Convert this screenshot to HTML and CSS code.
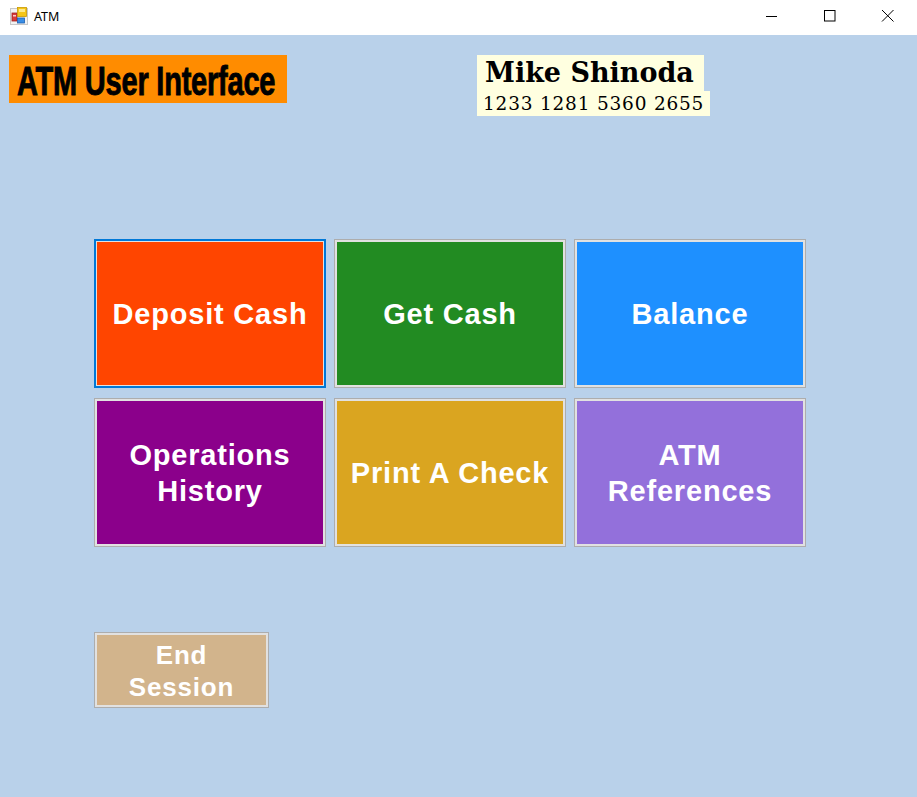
FILE: index.html
```html
<!DOCTYPE html>
<html lang="en">
<head>
<meta charset="utf-8">
<title>ATM</title>
<link rel="stylesheet" href="styles.css">
</head>
<body>
<div class="window">
  <div class="titlebar">
    <div class="app">
      <svg class="app-icon" width="18" height="18" viewBox="0 0 18 18">
        <rect x="0.5" y="1.5" width="17" height="16" fill="#f2f2f2" stroke="#c8c8c8"/>
        <rect x="2" y="6" width="5" height="8" fill="#d83b3b" stroke="#a02020" stroke-width="0.8"/>
        <rect x="3" y="8" width="3" height="1.5" fill="#f7c9c9"/>
        <rect x="7.5" y="0.5" width="9" height="9" fill="#f5c518" stroke="#c99a00" stroke-width="0.8"/>
        <rect x="9" y="2" width="6" height="3" fill="#fde98a"/>
        <rect x="7.5" y="11" width="7" height="5" fill="#3a8ee6" stroke="#1c5fb0" stroke-width="0.8"/>
      </svg>
      <span class="app-name">ATM</span>
    </div>
    <div class="controls">
      <div class="ctl">
        <svg width="14" height="14" viewBox="0 0 14 14"><line x1="1" y1="7.5" x2="12" y2="7.5" stroke="#000" stroke-width="1"/></svg>
      </div>
      <div class="ctl">
        <svg width="14" height="14" viewBox="0 0 14 14"><rect x="1.5" y="1.5" width="10.5" height="10.5" fill="none" stroke="#000" stroke-width="1"/></svg>
      </div>
      <div class="ctl">
        <svg width="14" height="14" viewBox="0 0 14 14"><path d="M1 1 L12.5 12.5 M12.5 1 L1 12.5" stroke="#000" stroke-width="1"/></svg>
      </div>
    </div>
  </div>

  <div class="content">
    <div class="header">
      <div class="brand"><span class="brand-text">ATM User Interface</span></div>
      <div class="customer">
        <div class="cust-name">Mike Shinoda</div>
        <div class="cust-card">1233 1281 5360 2655</div>
      </div>
    </div>

    <div class="grid">
      <div class="btn focused deposit">Deposit Cash</div>
      <div class="btn getcash">Get Cash</div>
      <div class="btn balance">Balance</div>
      <div class="btn history">Operations<br>History</div>
      <div class="btn check">Print A Check</div>
      <div class="btn refs">ATM<br>References</div>
    </div>

    <div class="btn end">End<br>Session</div>
  </div>
</div>
</body>
</html>
```

FILE: styles.css
```css
* { box-sizing: border-box; }
html, body { margin: 0; padding: 0; }
body {
  width: 917px;
  height: 797px;
  overflow: hidden;
  background: #b9d1ea;
  font-family: "Liberation Sans", Arial, sans-serif;
}
.window {
  width: 917px;
  height: 797px;
  display: flex;
  flex-direction: column;
}
.titlebar {
  height: 35px;
  background: #ffffff;
  display: flex;
  justify-content: space-between;
  align-items: stretch;
}
.app {
  display: flex;
  align-items: center;
  padding-left: 10px;
  padding-bottom: 3px;
}
.app-icon { display: block; margin-top: -1px; }
.app-name {
  margin-left: 6px;
  font-family: "Noto Sans", "Open Sans", sans-serif;
  font-size: 12.5px;
  color: #000;
}
.controls { display: flex; }
.ctl {
  width: 58px;
  display: flex;
  align-items: center;
  justify-content: center;
  padding-bottom: 4px;
}
.ctl svg { display: block; }

.content {
  flex: 1;
  padding: 20px 0 0 9px;
  display: flex;
  flex-direction: column;
}
.header {
  display: flex;
  align-items: flex-start;
  gap: 190px;
}
.brand {
  width: 278px;
  height: 48px;
  background: #ff8c00;
  display: flex;
  align-items: center;
  padding-left: 8px;
  overflow: hidden;
}
.brand-text {
  display: inline-block;
  font-family: "Liberation Sans", Arial, sans-serif;
  font-weight: bold;
  font-size: 40px;
  line-height: 1;
  color: #000;
  white-space: nowrap;
  transform: scaleX(0.725);
  transform-origin: left center;
  letter-spacing: -0.3px;
  -webkit-text-stroke: 0.9px #000;
  margin-top: 3px;
}
.customer {
  display: flex;
  flex-direction: column;
  align-items: flex-start;
}
.cust-name {
  background: #ffffe0;
  font-family: "DejaVu Serif", "Liberation Serif", serif;
  font-weight: bold;
  font-size: 27px;
  line-height: 36px;
  height: 36px;
  padding: 0 10px 0 8px;
  color: #000;
  white-space: nowrap;
}
.cust-card {
  background: #ffffe0;
  font-family: "DejaVu Serif", "Liberation Serif", serif;
  font-size: 18.5px;
  line-height: 25px;
  height: 25px;
  padding: 0 6px 0 6px;
  color: #000;
  letter-spacing: 0.8px;
  white-space: nowrap;
}

.grid {
  margin-top: 123px;
  margin-left: 85px;
  display: grid;
  grid-template-columns: repeat(3, 232px);
  grid-template-rows: repeat(2, 149px);
  column-gap: 8px;
  row-gap: 10px;
}
.btn {
  display: flex;
  align-items: center;
  justify-content: center;
  text-align: center;
  color: #ffffff;
  font-weight: bold;
  font-size: 29px;
  line-height: 36px;
  letter-spacing: 0.8px;
  border: 1px solid #adadad;
  box-shadow: inset 0 0 0 2px #e1e1e1;
  padding-top: 1px;
}
.btn.focused {
  border: 2px solid #0078d7;
  box-shadow: inset 0 0 0 1px #e1e1e1;
}
.deposit { background: #ff4500; }
.getcash { background: #228b22; }
.balance { background: #1e90ff; }
.history { background: #8b008b; }
.check { background: #daa520; }
.refs { background: #9370db; }
.end {
  background: #d2b48c;
  width: 175px;
  height: 76px;
  margin-top: 85px;
  margin-left: 85px;
  font-size: 26px;
  line-height: 32px;
}
```
